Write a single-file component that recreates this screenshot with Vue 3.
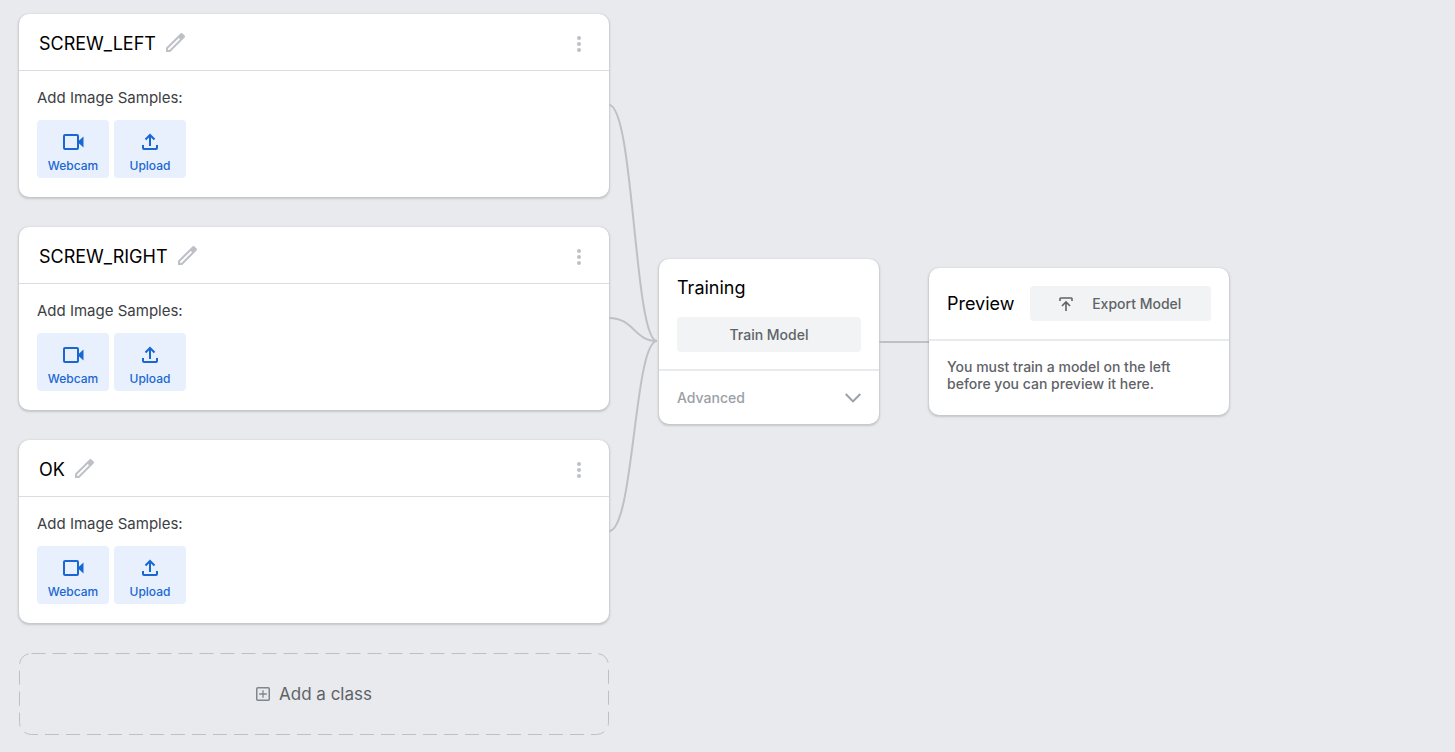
<script setup>
import { ref } from 'vue'

const classes = ref([
  { id: 1, name: 'SCREW_LEFT' },
  { id: 2, name: 'SCREW_RIGHT' },
  { id: 3, name: 'OK' },
])

// Vertical output point of each class card, and the shared training input
const outputs = [91, 304, 517]
const input = 327

const curve = (y) => `M0 ${y}C25 ${y} 25 ${input} 48 ${input}`
</script>

<template>
  <main class="board">
    <div class="classes">
      <section v-for="item in classes" :key="item.id" class="card">
        <header class="class-head">
          <h2 class="title">{{ item.name }}</h2>
          <button class="icon-button edit" type="button" :aria-label="`Rename ${item.name}`">
            <svg width="19" height="19" viewBox="0 0 18 18" fill="#bdc1c6" fill-rule="evenodd">
              <path d="M0 14 13.400.6a1.800 1.800 0 0 1 2.500 0l1.500 1.500a1.800 1.800 0 0 1 0 2.500L4 18H0ZM2 16H3.200L13.300 5.900 12.100 4.700 2 14.800Z" />
            </svg>
          </button>
          <button class="icon-button more" type="button" :aria-label="`Options for ${item.name}`">
            <svg width="4" height="16" viewBox="0 0 4 16" fill="#bdc1c6">
              <circle cx="2" cy="2" r="2" />
              <circle cx="2" cy="8" r="2" />
              <circle cx="2" cy="14" r="2" />
            </svg>
          </button>
        </header>
        <div class="class-body">
          <p class="label">Add Image Samples:</p>
          <div class="sources">
            <button class="source" type="button">
              <svg width="24" height="24" viewBox="0 0 24 24">
                <rect x="3" y="5" width="14" height="14" rx="1" fill="none" stroke="#1967d2" stroke-width="2" />
                <path d="M17 11.5 22.500 6.500V17.500L17 12.500Z" fill="#1967d2" />
              </svg>
              Webcam
            </button>
            <button class="source" type="button">
              <svg width="24" height="24" viewBox="0 0 24 24" fill="none" stroke="#1967d2" stroke-width="2">
                <path d="M12 16V5M7.500 9.500 12 5l4.500 4.500M5 15v3q0 1 1 1h12q1 0 1-1v-3" />
              </svg>
              Upload
            </button>
          </div>
        </div>
      </section>

      <button class="add-class" type="button">
        <svg class="outline" aria-hidden="true">
          <rect x="0.5" y="0.5" rx="12" />
        </svg>
        <svg width="14" height="14" viewBox="0 0 14 14" fill="none" stroke="#80868b">
          <rect x=".75" y=".75" width="12.5" height="12.5" rx="1" stroke-width="1.500" />
          <path d="M7 3.200v7.600M3.200 7h7.600" stroke-width="1.300" />
        </svg>
        Add a class
      </button>
    </div>

    <svg class="wires" viewBox="0 0 50 721" aria-hidden="true">
      <path v-for="y in outputs" :key="y" :d="curve(y)" />
    </svg>

    <section class="card training">
      <div class="training-main">
        <h2 class="title">Training</h2>
        <button class="action" type="button">Train Model</button>
      </div>
      <button class="advanced" type="button">
        Advanced
        <svg width="16" height="10" viewBox="0 0 16 10" fill="none" stroke="#9aa0a6" stroke-width="2">
          <path d="M.7 1 8 8.400 15.300 1" />
        </svg>
      </button>
    </section>

    <div class="link"></div>

    <section class="card preview">
      <header class="preview-head">
        <h2 class="title">Preview</h2>
        <button class="action export" type="button">
          <svg width="14" height="14" viewBox="0 0 14 14" fill="none" stroke="#5f6368" stroke-width="1.600">
            <path d="M1 4V1.700Q1 1 1.700 1H12.300Q13 1 13 1.700V4M7 14V5.500M3 9 7 5l4 4" />
          </svg>
          Export Model
        </button>
      </header>
      <p class="hint">You must train a model on the left before you can preview it here.</p>
    </section>
  </main>
</template>

<style>
body {
  background: #e8eaed;
}
</style>

<style scoped>
.board {
  display: flex;
  align-items: center;
  padding: 14px 19px 17px;
  font-family: Inter, "Liberation Sans", sans-serif;
  color: #000;
}

button {
  margin: 0;
  padding: 0;
  border: 0;
  background: none;
  font: inherit;
  cursor: pointer;
}

svg {
  display: block;
  flex: none;
}

.card {
  background: #fff;
  border-radius: 10px;
  box-shadow: 0 1px 2px 1px rgba(60, 64, 67, 0.2);
}

.title {
  margin: 0;
  font-size: 18px;
  font-weight: 400;
  line-height: 24px;
}

.classes {
  flex: 0 1 590px;
  display: flex;
  flex-direction: column;
  gap: 30px;
}

.class-head {
  display: flex;
  align-items: center;
  padding: 16px 20px;
  height: 24px;
  border-bottom: 1px solid #dadce0;
}

.class-head .title {
  padding-top: 4px;
}

.edit {
  margin-left: 10px;
}

.more {
  margin-left: auto;
  padding: 4px 8px 0;
}

.class-body {
  padding: 17px 18px 19px;
}

.label {
  margin: 0 0 12px;
  font-size: 15px;
  line-height: 20px;
  color: #3c4043;
}

.sources {
  display: flex;
  gap: 5px;
}

.source {
  display: flex;
  flex-direction: column;
  align-items: center;
  gap: 4px;
  width: 72px;
  padding: 10px 0 4px;
  border-radius: 4px;
  background: #e8f0fe;
  color: #1967d2;
  font-size: 12px;
  font-weight: 500;
  line-height: 16px;
}

.add-class {
  position: relative;
  display: flex;
  align-items: center;
  justify-content: center;
  gap: 9px;
  height: 82px;
  color: #5f6368;
  font-size: 17px;
}

.outline {
  position: absolute;
  inset: 0;
  width: 100%;
  height: 100%;
}

.outline rect {
  width: calc(100% - 1px);
  height: calc(100% - 1px);
  fill: none;
  stroke: #bdc1c6;
  stroke-width: 1;
  stroke-dasharray: 14 7;
}

.wires {
  width: 50px;
  height: 721px;
  fill: none;
  stroke: #bdc1c6;
  stroke-width: 2;
}

.training,
.link,
.preview {
  margin-bottom: 66px;
}

.training {
  flex: none;
  width: 220px;
}

.training-main {
  padding: 17px 18px;
  border-bottom: 2px solid #e8eaed;
}

.action {
  display: flex;
  align-items: center;
  justify-content: center;
  height: 35px;
  border-radius: 4px;
  background: #f1f3f4;
  color: #5f6368;
  font-size: 14px;
  font-weight: 500;
}

.training .action {
  width: 100%;
  margin-top: 17px;
}

.advanced {
  display: flex;
  align-items: center;
  justify-content: space-between;
  width: 100%;
  height: 53px;
  padding: 0 18px;
  color: #9aa0a6;
  font-size: 14px;
  font-weight: 500;
}

.link {
  flex: none;
  width: 50px;
  height: 2px;
  background: #bdc1c6;
}

.preview {
  flex: none;
  width: 300px;
}

.preview-head {
  display: flex;
  align-items: center;
  gap: 15px;
  padding: 18px;
  border-bottom: 2px solid #e8eaed;
}

.export {
  flex: 1;
  gap: 19px;
}

.hint {
  margin: 0;
  padding: 17px 18px 23px;
  color: #5f6368;
  font-size: 14px;
  font-weight: 500;
  line-height: 17px;
}
</style>
